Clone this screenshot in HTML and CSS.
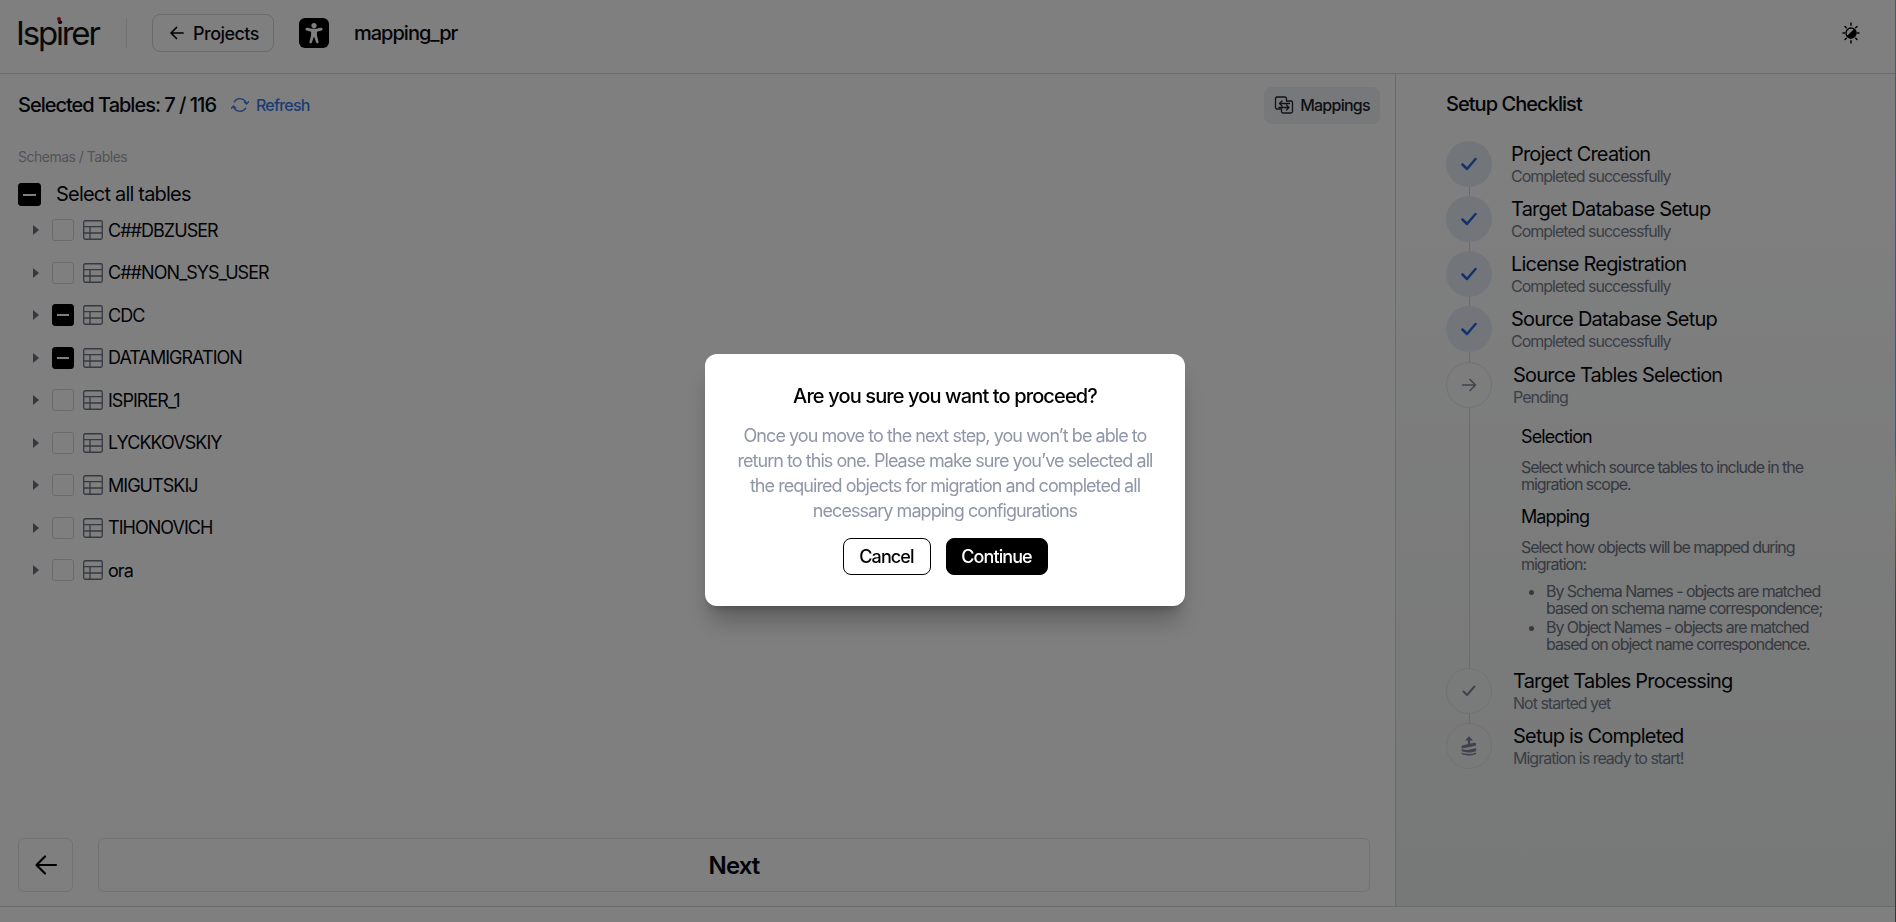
FILE: index.html
```html
<!DOCTYPE html>
<html lang="en">
<head>
<meta charset="utf-8">
<title>Ispirer</title>
<link rel="stylesheet" href="styles.css">
</head>
<body>
<div class="app">
  <header class="topbar">
    <div class="logo">Ispirer<span class="logo-dot"></span></div>
    <div class="vline"></div>
    <button class="back-btn">
      <svg width="20" height="20" viewBox="0 0 20 20" class="stroke"><path d="M16 10H4.500M9.500 4.500 4 10l5.500 5.500"/></svg>
      Projects
    </button>
    <div class="access">
      <svg width="30" height="30" viewBox="0 0 30 30" fill="#fff"><circle cx="15" cy="7.600" r="2.600"/><path d="M6.600 10.400c-.5 1 .1 1.800.9 2l4.600 1.400v3.400L10.400 24c-.2 1.600 2 1.900 2.500.6l1.700-5.400h.8l1.700 5.400c.5 1.300 2.700 1 2.500-.6l-1.700-6.800v-3.400l4.600-1.400c.8-.2 1.400-1 .9-2-.4-.8-1.200-.8-1.900-.6-1.900.5-4.200 1-6.500 1s-4.600-.5-6.500-1c-.7-.2-1.500-.2-1.900.6z"/></svg>
    </div>
    <div class="project">mapping_pr</div>
    <div class="spacer"></div>
    <svg class="theme" width="18" height="22" viewBox="0 0 18 22" fill="none" stroke="#000" stroke-width="1.400" stroke-linecap="round"><circle cx="9" cy="11" r="5"/><path d="M5.500 14.500a5 5 0 0 0 7-7z" fill="#000"/><path d="M9 1v2.200M9 18.800V21M1 11h1.500M15.500 11H17M3 4.500l1.300 1.300M13.700 16.200 15 17.500M15 4.500l-1.300 1.300M4.300 16.200 3 17.500"/></svg>
  </header>

  <div class="main">
    <section class="left">
      <div class="toolbar">
        <h2 class="selected">Selected Tables: 7 / 116</h2>
        <a class="refresh">
          <svg width="18" height="18" viewBox="0 0 18 18" fill="none" stroke="#3a78e8" stroke-width="1.300" stroke-linecap="round" stroke-linejoin="round"><path d="M15.500 7.500A6.800 6.800 0 0 0 3.300 5.800M2.500 10.500a6.800 6.800 0 0 0 12.200 1.700"/><path d="M13.300 6 15.600 8 17.600 5.600M4.700 12 2.400 10 .4 12.400"/></svg>
          Refresh
        </a>
        <div class="spacer"></div>
        <button class="mappings">
          <svg width="20" height="20" viewBox="0 0 20 20" fill="none" stroke="#1f2430" stroke-width="1.300" stroke-linecap="round" stroke-linejoin="round"><path d="M7 14H3a1.500 1.500 0 0 1-1.500-1.500v-9A1.500 1.500 0 0 1 3 2h8a1.500 1.500 0 0 1 1.500 1.500V6"/><path d="M13 6h4a1.500 1.500 0 0 1 1.500 1.500v9A1.500 1.500 0 0 1 17 18H9a1.500 1.500 0 0 1-1.500-1.500V14"/><path d="M15.500 8.500H5.500M8 6 5.500 8.500 8 11M5 12.500h10M12.500 10 15 12.500 12.500 15"/></svg>
          Mappings
        </button>
      </div>
      <div class="crumb">Schemas / Tables</div>
      <label class="select-all"><span class="check on"></span>Select all tables</label>
      <ul class="tree">
        <li class="row"><span class="caret"></span><span class="check"></span><svg class="tbl" viewBox="0 0 20 20"><rect x=".75" y=".75" width="18.500" height="18.500" rx="1.500"/><path d="M.75 6.700h18.500M.75 13h18.500M7 6.700v12.500"/></svg>C##DBZUSER</li>
        <li class="row"><span class="caret"></span><span class="check"></span><svg class="tbl" viewBox="0 0 20 20"><rect x=".75" y=".75" width="18.500" height="18.500" rx="1.500"/><path d="M.75 6.700h18.500M.75 13h18.500M7 6.700v12.500"/></svg>C##NON_SYS_USER</li>
        <li class="row"><span class="caret"></span><span class="check on"></span><svg class="tbl" viewBox="0 0 20 20"><rect x=".75" y=".75" width="18.500" height="18.500" rx="1.500"/><path d="M.75 6.700h18.500M.75 13h18.500M7 6.700v12.500"/></svg>CDC</li>
        <li class="row"><span class="caret"></span><span class="check on"></span><svg class="tbl" viewBox="0 0 20 20"><rect x=".75" y=".75" width="18.500" height="18.500" rx="1.500"/><path d="M.75 6.700h18.500M.75 13h18.500M7 6.700v12.500"/></svg>DATAMIGRATION</li>
        <li class="row"><span class="caret"></span><span class="check"></span><svg class="tbl" viewBox="0 0 20 20"><rect x=".75" y=".75" width="18.500" height="18.500" rx="1.500"/><path d="M.75 6.700h18.500M.75 13h18.500M7 6.700v12.500"/></svg>ISPIRER_1</li>
        <li class="row"><span class="caret"></span><span class="check"></span><svg class="tbl" viewBox="0 0 20 20"><rect x=".75" y=".75" width="18.500" height="18.500" rx="1.500"/><path d="M.75 6.700h18.500M.75 13h18.500M7 6.700v12.500"/></svg>LYCKKOVSKIY</li>
        <li class="row"><span class="caret"></span><span class="check"></span><svg class="tbl" viewBox="0 0 20 20"><rect x=".75" y=".75" width="18.500" height="18.500" rx="1.500"/><path d="M.75 6.700h18.500M.75 13h18.500M7 6.700v12.500"/></svg>MIGUTSKIJ</li>
        <li class="row"><span class="caret"></span><span class="check"></span><svg class="tbl" viewBox="0 0 20 20"><rect x=".75" y=".75" width="18.500" height="18.500" rx="1.500"/><path d="M.75 6.700h18.500M.75 13h18.500M7 6.700v12.500"/></svg>TIHONOVICH</li>
        <li class="row"><span class="caret"></span><span class="check"></span><svg class="tbl" viewBox="0 0 20 20"><rect x=".75" y=".75" width="18.500" height="18.500" rx="1.500"/><path d="M.75 6.700h18.500M.75 13h18.500M7 6.700v12.500"/></svg>ora</li>
      </ul>
      <div class="actions">
        <button class="prev"><svg width="24" height="24" viewBox="0 0 24 24" fill="none" stroke="#000" stroke-width="2.200" stroke-linecap="round" stroke-linejoin="round"><path d="M22 12H3M11 3.500 2.500 12l8.500 8.500"/></svg></button>
        <button class="next">Next</button>
      </div>
    </section>

    <aside class="right">
      <h2 class="check-title">Setup Checklist</h2>
      <div class="step done">
        <div class="dot"><svg width="16" height="14" viewBox="0 0 16 14" class="tick"><path d="M1.500 7.500 6 12 14.500 2"/></svg></div>
        <div class="step-text"><div class="step-name">Project Creation</div><div class="step-sub">Completed successfully</div></div>
      </div>
      <div class="step done">
        <div class="dot"><svg width="16" height="14" viewBox="0 0 16 14" class="tick"><path d="M1.500 7.500 6 12 14.500 2"/></svg></div>
        <div class="step-text"><div class="step-name">Target Database Setup</div><div class="step-sub">Completed successfully</div></div>
      </div>
      <div class="step done">
        <div class="dot"><svg width="16" height="14" viewBox="0 0 16 14" class="tick"><path d="M1.500 7.500 6 12 14.500 2"/></svg></div>
        <div class="step-text"><div class="step-name">License Registration</div><div class="step-sub">Completed successfully</div></div>
      </div>
      <div class="step done last-done">
        <div class="dot"><svg width="16" height="14" viewBox="0 0 16 14" class="tick"><path d="M1.500 7.500 6 12 14.500 2"/></svg></div>
        <div class="step-text"><div class="step-name">Source Database Setup</div><div class="step-sub">Completed successfully</div></div>
      </div>
      <div class="step todo">
        <div class="dot"><svg width="16" height="14" viewBox="0 0 16 14" fill="none" stroke="#80859a" stroke-width="1.500" stroke-linecap="round" stroke-linejoin="round"><path d="M1.500 7h13M9 1.500 14.500 7 9 12.500"/></svg></div>
        <div class="step-text"><div class="step-name">Source Tables Selection</div><div class="step-sub">Pending</div></div>
      </div>
      <div class="details">
        <h3>Selection</h3>
        <p>Select which source tables to include in the migration scope.</p>
        <h3>Mapping</h3>
        <p>Select how objects will be mapped during migration:</p>
        <ul>
          <li>By Schema Names - objects are matched based on schema name correspondence;</li>
          <li>By Object Names - objects are matched based on object name correspondence.</li>
        </ul>
      </div>
      <div class="step todo">
        <div class="dot"><svg width="14" height="12" viewBox="0 0 14 12" fill="none" stroke="#80859a" stroke-width="2" stroke-linecap="round" stroke-linejoin="round"><path d="M1.500 6.500 5 10l7.500-8.500"/></svg></div>
        <div class="step-text"><div class="step-name">Target Tables Processing</div><div class="step-sub">Not started yet</div></div>
      </div>
      <div class="step todo last">
        <div class="dot"><svg width="16" height="20" viewBox="0 0 16 20" fill="#80859a"><path d="M8 0l4 4.500H9.200V9H6.800V4.500H4z"/><path d="M1 9.500 13 6.800c1.500.3 2.200.8 2.200 1.600 0 .7-.6 1.200-1.700 1.600L1.300 12.500C.6 12 .5 11 .5 10.500z"/><path d="M.5 12.800c2 1.300 6 1.500 9 .7l5.700-1.500v2.200c0 1.300-3.300 2.200-7.200 2.200s-7.500-.9-7.500-2.200z"/><path d="M.5 16.600c1.500 1 4.500 1.300 7.500 1.300s5.800-.5 7.200-1.300v.7c0 1.300-3.300 2.200-7.200 2.200s-7.500-.9-7.500-2.200z"/></svg></div>
        <div class="step-text"><div class="step-name">Setup is Completed</div><div class="step-sub">Migration is ready to start!</div></div>
      </div>
    </aside>
  </div>
  <footer class="bottom"></footer>
</div>
<div class="edge"></div>

<div class="overlay">
  <div class="modal">
    <h2>Are you sure you want to proceed?</h2>
    <p>Once you move to the next step, you won’t be able to return to this one. Please make sure you’ve selected all the required objects for migration and completed all necessary mapping configurations</p>
    <div class="modal-actions">
      <button class="cancel">Cancel</button>
      <button class="continue">Continue</button>
    </div>
  </div>
</div>
</body>
</html>
```
FILE: styles.css
```css
* { box-sizing: border-box; }
html, body { margin: 0; height: 100%; }
body { display: flex; font-family: Inter, "Liberation Sans", sans-serif; color: #000; background: #fff; overflow: hidden; letter-spacing: -0.9px; }
button { font-family: inherit; letter-spacing: inherit; cursor: pointer; }
h2, h3, p, ul { margin: 0; padding: 0; }
.app { flex: 1; min-width: 0; height: 100vh; display: flex; flex-direction: column; }
.edge { width: 1px; flex: none; background: linear-gradient(#68c4ff 0, #70b8f0 48%, #f6f4a0 53%, #b8b880 58%, #808080 65%, #707070 100%); }
.spacer { flex: 1; }

.topbar { height: 74px; flex: none; display: flex; align-items: center; padding: 0 35px 7px 16px; border-bottom: 1px solid #d4d6da; }
.logo { position: relative; font-size: 33px; font-weight: 400; letter-spacing: -2.200px; color: #111; width: 86px; line-height: 40px; }
.logo-dot { position: absolute; left: 41px; top: 4px; width: 4px; height: 4px; border-radius: 50%; background: #d0101c; }
.vline { width: 1px; height: 30px; background: #e0e2e6; margin-left: 24px; }
.back-btn { margin-left: 25px; width: 122px; height: 38px; display: flex; align-items: center; justify-content: center; gap: 6px; background: none; border: 1px solid #d4d6da; border-radius: 8px; font-size: 18px; font-weight: 500; letter-spacing: -0.55px; color: #0c0f18; padding: 0; }
.stroke { fill: none; stroke: #000; stroke-width: 1.700; stroke-linecap: round; stroke-linejoin: round; }
.access { margin-left: 25px; width: 30px; height: 30px; background: #000; border-radius: 6px; }
.project { margin-left: 25px; font-size: 20px; font-weight: 500; letter-spacing: -1px; color: #05070d; }
.theme { display: block; }

.main { flex: 1; min-height: 0; display: flex; }
.left { flex: 1; min-width: 0; display: flex; flex-direction: column; padding: 0 0 14px 0; }
.right { width: 500px; flex: none; border-left: 1px solid #d4d6da; padding: 18px 0 0 50px; background: linear-gradient(#fff 10%, #eef0f0 100%); }

.toolbar { display: flex; align-items: center; height: 38px; margin-top: 12px; padding: 0 15px 0 18px; }
.selected { font-size: 20px; font-weight: 500; letter-spacing: -1px; color: #05070d; }
.refresh { display: flex; align-items: center; gap: 7px; margin-left: 15px; font-size: 16px; font-weight: 500; letter-spacing: -0.8px; color: #3a78e8; }
.mappings { width: 116px; height: 37px; display: flex; align-items: center; justify-content: center; gap: 6px; background: #eef0f2; border: 0; border-radius: 8px; font-size: 16px; font-weight: 500; letter-spacing: -0.75px; color: #1a1e2a; padding: 0; }

.crumb { margin: 23px 0 0 18px; font-size: 14px; line-height: 20px; letter-spacing: -0.5px; color: #a3a7b2; }
.select-all { display: flex; align-items: center; gap: 15px; margin: 14px 0 0 18px; height: 26px; font-size: 20px; letter-spacing: -0.8px; color: #05070d; }
.check { display: block; position: relative; width: 23px; height: 23px; flex: none; border: 1px solid #d4d6da; border-radius: 3px; }
.check.on { background: #000; border-color: #000; }
.check.on::after { content: ""; position: absolute; left: 4px; right: 4px; top: 10px; height: 2px; background: #fff; }

.tree { list-style: none; margin-top: 2px; }
.row { display: flex; align-items: center; height: 42.500px; padding-left: 33px; font-size: 18px; letter-spacing: -0.97px; color: #05070d; }
.caret { width: 0; height: 0; border-left: 6px solid #6b7280; border-top: 5px solid transparent; border-bottom: 5px solid transparent; margin-right: 13px; }
.row .check { width: 22px; height: 22px; }
.row .check.on::after { left: 4px; right: 4px; top: 9px; }
.tbl { width: 20px; height: 20px; margin: 0 5px 0 9px; flex: none; fill: none; stroke: #6b7280; stroke-width: 1.300; }

.actions { margin-top: auto; display: flex; gap: 25px; padding: 0 25px 0 18px; }
.prev { width: 55px; height: 54px; background: none; border: 1px solid #e2e4e8; border-radius: 6px; display: flex; align-items: center; justify-content: center; padding: 0; }
.next { flex: 1; height: 54px; background: none; border: 1px solid #e2e4e8; border-radius: 6px; font-size: 24px; font-weight: 600; color: #05070d; }

.check-title { font-size: 20px; font-weight: 500; letter-spacing: -0.95px; line-height: 24px; margin: 0 0 25px; color: #05070d; }
.step { display: flex; gap: 19px; height: 55px; position: relative; }
.step::after { content: ""; position: absolute; left: 23px; top: 46px; height: 9px; width: 1px; background: #d4d6da; }
.step.last::after { display: none; }
.last-done { height: 56px; }
.last-done::after { height: 10px; }
.dot { width: 46px; height: 46px; flex: none; border-radius: 50%; display: flex; align-items: center; justify-content: center; }
.done .dot { background: #e5ebf4; }
.todo .dot { border: 1px solid #e2e4e8; }
.tick { fill: none; stroke: #2a62d8; stroke-width: 2.500; stroke-linecap: round; stroke-linejoin: round; }
.step-text { padding-top: 1px; }
.step-name { font-size: 20px; line-height: 24px; letter-spacing: -0.8px; color: #05070d; }
.step-sub { font-size: 16px; line-height: 20px; letter-spacing: -1px; color: #767c8c; }
.todo { gap: 21px; }

.details { margin-left: 23px; border-left: 1px solid #d4d6da; padding: 9px 42px 13px 51px; margin-top: -9px; letter-spacing: -1.05px; }
.details h3 { font-size: 18px; font-weight: 400; line-height: 22px; letter-spacing: -0.9px; color: #05070d; margin-top: 9px; }
.details p { font-size: 16px; line-height: 17px; color: #6b7280; margin-top: 11px; margin-bottom: 13px; }
.details ul { font-size: 16px; line-height: 17px; color: #6b7280; padding-left: 25px; margin-top: -3px; }
.details li { margin-bottom: 2px; }

.bottom { height: 16px; flex: none; border-top: 1px solid #d4d6da; }

.overlay { position: fixed; inset: 0; background: rgba(0,0,0,.5); display: flex; align-items: flex-start; justify-content: center; padding: 354px 6px 0 0; }
.modal { width: 480px; height: 252px; background: #fff; border-radius: 12px; padding: 30px 30px 0; text-align: center; box-shadow: 0 20px 25px -5px rgba(0,0,0,.25), 0 8px 10px -6px rgba(0,0,0,.25); }
.modal h2 { font-size: 20px; font-weight: 450; line-height: 24px; letter-spacing: -0.88px; color: #000; }
.modal p { margin-top: 15px; font-size: 18px; line-height: 25px; letter-spacing: -0.95px; color: #8f96a8; }
.modal-actions { display: flex; justify-content: center; gap: 15px; margin-top: 15px; }
.cancel, .continue { height: 37px; border-radius: 8px; font-size: 18px; font-weight: 500; padding: 0; }
.cancel { width: 88px; background: #fff; border: 1px solid #000; color: #000; }
.continue { width: 102px; background: #000; border: 1px solid #000; color: #fff; }
```
